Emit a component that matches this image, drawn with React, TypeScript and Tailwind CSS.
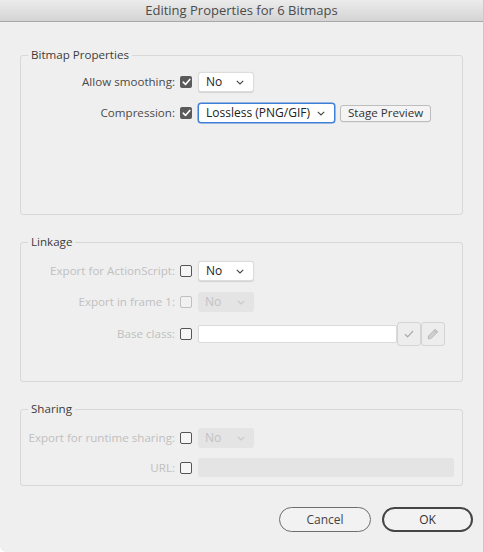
import React from "react";

const Check = ({ checked = false }: { checked?: boolean }) =>
  checked ? (
    <div className="w-[12px] h-[12px] rounded-[2px] bg-[#5a5a5a] flex items-center justify-center shrink-0">
      <svg width="9" height="8" viewBox="0 0 9 8">
        <path d="M1.2 4.2 L3.5 6.4 L7.8 1.4" fill="none" stroke="#fff" strokeWidth="1.6" strokeLinecap="round" strokeLinejoin="round" />
      </svg>
    </div>
  ) : (
    <div className="w-[12px] h-[12px] rounded-[2px] border border-[#555] bg-[#f6f6f6] shrink-0" />
  );

const Chevron = ({ color }: { color: string }) => (
  <svg width="8" height="5" viewBox="0 0 8 5">
    <path d="M0.8 0.8 L4 4 L7.2 0.8" fill="none" stroke={color} strokeWidth="1.1" />
  </svg>
);

const Select = ({
  value,
  width,
  disabled = false,
  focused = false,
}: {
  value: string;
  width: string;
  disabled?: boolean;
  focused?: boolean;
}) => (
  <div
    className={
      "h-[20px] rounded-[3px] flex items-center justify-between pl-[7px] pr-[9px] text-[12px] " +
      width +
      " " +
      (disabled
        ? "bg-[#e4e4e4] text-[#c2c2c2]"
        : focused
        ? "bg-white border border-[#3d7fd6] text-[#222] shadow-[0_0_0_0.5px_#3d7fd6]"
        : "bg-white border border-[#dcdcdc] text-[#222] shadow-[0_0.5px_1px_rgba(0,0,0,0.12)]")
    }
  >
    <span className="leading-none">{value}</span>
    <Chevron color={disabled ? "#c8c8c8" : "#444"} />
  </div>
);

const Row = ({
  label,
  disabled = false,
  checkDisabled = false,
  checked = false,
  children,
  className = "",
}: {
  label: string;
  disabled?: boolean;
  checkDisabled?: boolean;
  checked?: boolean;
  children?: React.ReactNode;
  className?: string;
}) => (
  <div className={"flex items-center " + className}>
    <div
      className={
        "w-[159px] text-right pr-[5px] whitespace-nowrap " + (disabled ? "text-[#c0c0c0]" : "text-[#4a4a4a]")
      }
    >
      {label}
    </div>
    <div className={checkDisabled ? "opacity-30" : ""}>
      <Check checked={checked} />
    </div>
    <div className="ml-[6px] flex items-center">{children}</div>
  </div>
);

const Group = ({
  title,
  height,
  className = "",
  children,
}: {
  title: string;
  height: string;
  className?: string;
  children: React.ReactNode;
}) => (
  <div className={"relative border border-[#d8d8d8] rounded-[3px] " + height + " " + className}>
    <div className="absolute -top-[9px] left-[7px] px-[3px] bg-[#efefef] text-[#3c3c3c] leading-[16px]">{title}</div>
    {children}
  </div>
);

export default function App() {
  return (
    <div
      className="w-[484px] h-[552px] bg-[#efefef] text-[11.6px] flex flex-col border-r border-[#c9c9c9] rounded-bl-[6px] overflow-hidden"
      style={{ fontFamily: '"Open Sans", "Noto Sans", sans-serif' }}
    >
      <div className="h-[22px] shrink-0 bg-gradient-to-b from-[#ececec] to-[#d4d4d4] border-b border-[#a9a9a9] flex items-center justify-center text-[13px] text-[#4b4b4b]">
        Editing Properties for 6 Bitmaps
      </div>

      <div className="pl-[20px] pr-[20px] pt-[33px] flex flex-col">
        <Group title="Bitmap Properties" height="h-[160px]">
          <div className="pt-[16px] flex flex-col gap-[11px]">
            <Row label="Allow smoothing:" checked>
              <Select value="No" width="w-[56px]" />
            </Row>
            <Row label="Compression:" checked>
              <Select value="Lossless (PNG/GIF)" width="w-[137px]" focused />
              <div className="ml-[5px] h-[17px] px-[7px] flex items-center border border-[#bdbdbd] rounded-[3px] bg-[#f4f4f4] text-[#333] shadow-[0_0.5px_0.5px_rgba(0,0,0,0.08)]">
                Stage Preview
              </div>
            </Row>
          </div>
        </Group>

        <Group title="Linkage" height="h-[140px]" className="mt-[27px]">
          <div className="pt-[18px] flex flex-col">
            <Row label="Export for ActionScript:" disabled>
              <Select value="No" width="w-[56px]" />
            </Row>
            <Row label="Export in frame 1:" disabled checkDisabled className="mt-[11px]">
              <Select value="No" width="w-[56px]" disabled />
            </Row>
            <Row label="Base class:" disabled className="mt-[10px]">
              <div className="w-[199px] h-[18px] bg-white border border-[#dadada] rounded-[2px]" />
              <div className="w-[24px] h-[24px] border border-[#d4d4d4] rounded-[3px] bg-[#ededed] flex items-center justify-center">
                <svg width="10" height="8" viewBox="0 0 10 8">
                  <path d="M1 4.3 L3.6 6.8 L9 1" fill="none" stroke="#aaa" strokeWidth="1.2" />
                </svg>
              </div>
              <div className="w-[24px] h-[24px] border border-[#d4d4d4] rounded-[3px] bg-[#ededed] flex items-center justify-center">
                <svg width="12" height="12" viewBox="0 0 12 12">
                  <path d="M8.2 1.2 L10.8 3.8 L4 10.6 L1.2 10.8 L1.4 8 Z" fill="#cfcfcf" stroke="#b0b0b0" strokeWidth="0.8" strokeLinejoin="round" />
                  <path d="M7 2.4 L9.6 5" stroke="#b0b0b0" strokeWidth="0.8" />
                </svg>
              </div>
            </Row>
          </div>
        </Group>

        <Group title="Sharing" height="h-[77px]" className="mt-[27px]">
          <div className="pt-[18px] flex flex-col">
            <Row label="Export for runtime sharing:" disabled>
              <Select value="No" width="w-[56px]" disabled />
            </Row>
            <Row label="URL:" disabled className="mt-[10px]">
              <div className="w-[256px] h-[19px] bg-[#e4e4e4] rounded-[2px]" />
            </Row>
          </div>
        </Group>
      </div>

      <div className="flex justify-end pr-[10px] mt-[21px] gap-[11px]">
        <div className="w-[92px] h-[25px] rounded-full border border-[#6e6e6e] flex items-center justify-center text-[12px] text-[#444] bg-[#f2f2f2]">
          Cancel
        </div>
        <div className="w-[91px] h-[25px] rounded-full border-2 border-[#454545] flex items-center justify-center text-[12px] text-[#333] bg-[#f2f2f2]">
          OK
        </div>
      </div>
    </div>
  );
}
